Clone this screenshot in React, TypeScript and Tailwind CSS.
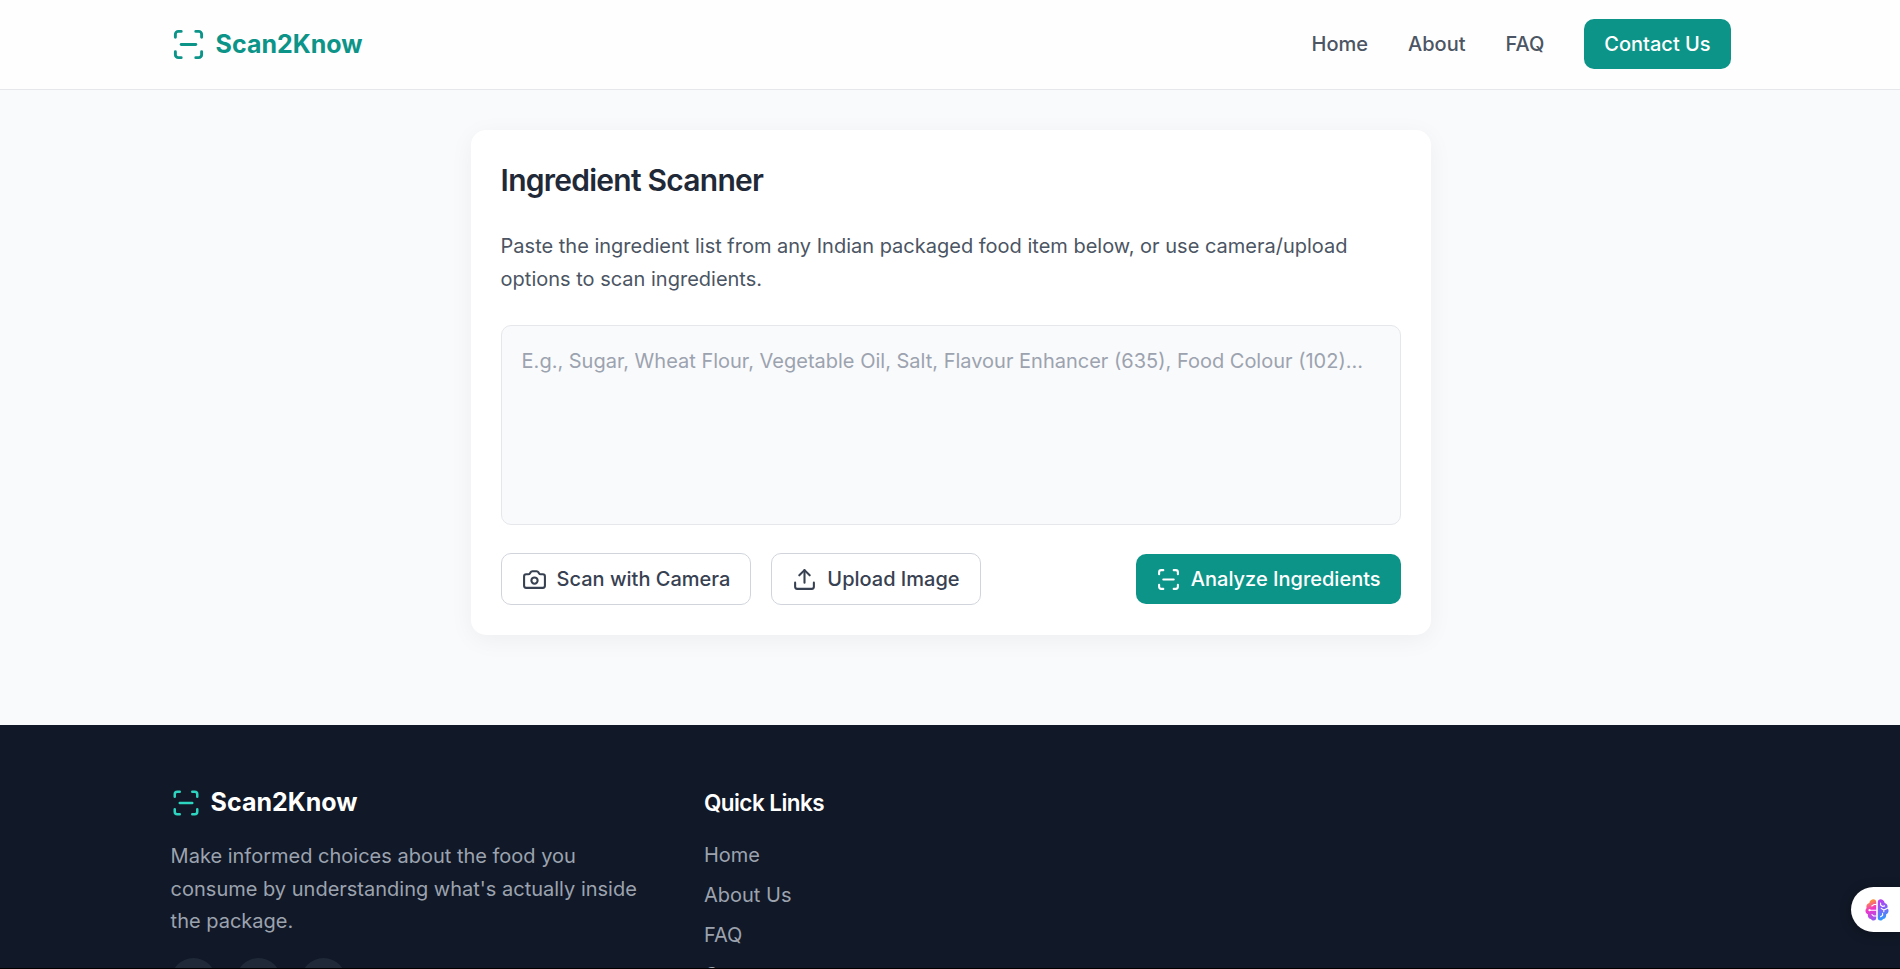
import { Camera, ScanLine, Upload } from "lucide-react";

const navLinks = ["Home", "About", "FAQ"];
const quickLinks = ["Home", "About Us", "FAQ", "Contact"];

function Header() {
  return (
    <header className="h-[90px] shrink-0 border-b border-[#e5e7eb] bg-[#fefefe]">
      <div className="mx-auto flex h-[88px] w-[1600px] items-center justify-between pr-[19.4px] pl-[20.6px]">
        <a className="flex items-center gap-[10px] text-[25px] leading-[35px] font-bold text-[#0d9488]">
          <ScanLine size={35} />
          <span>Scan2Know</span>
        </a>
        <nav className="flex items-center gap-10 text-[20px] leading-[30px] font-medium text-[#4b5563]">
          {navLinks.map((label) => (
            <a key={label}>{label}</a>
          ))}
          <a className="rounded-[10px] bg-[#0d9488] px-5 py-[10px] text-white">Contact Us</a>
        </nav>
      </div>
    </header>
  );
}

function ScannerCard() {
  return (
    <section className="ml-[470.6px] w-[960px] rounded-[15px] bg-white p-[30px] shadow-[0_5px_25px_rgba(0,0,0,0.05)]">
      <h2 className="text-[30px] leading-[40px] font-semibold tracking-[-0.025em] text-[#1f2937]">
        Ingredient Scanner
      </h2>
      <p className="mt-[30px] text-[20px] leading-[32.5px] text-[#4b5563]">
        Paste the ingredient list from any Indian packaged food item below, or use camera/upload
        options to scan ingredients.
      </p>
      <textarea
        className="mt-[30px] block h-[200px] w-full resize-none rounded-[10px] border border-[#e5e7eb] bg-[#f9fafc] p-5 text-[20px] leading-[30px] outline-none placeholder:text-[#9ca3af]"
        placeholder="E.g., Sugar, Wheat Flour, Vegetable Oil, Salt, Flavour Enhancer (635), Food Colour (102)..."
      />
      <div className="mt-[28px] flex items-center justify-between text-[20px] leading-[30px] font-medium">
        <div className="flex gap-5 text-[#374151]">
          <button className="flex items-center gap-[10px] rounded-[10px] border border-[#d1d5db] px-5 py-[10px]">
            <Camera size={25} />
            Scan with Camera
          </button>
          <button className="flex items-center gap-[10px] rounded-[10px] border border-[#d1d5db] px-5 py-[10px]">
            <Upload size={25} />
            Upload Image
          </button>
        </div>
        <button className="flex items-center gap-[10px] rounded-[10px] bg-[#0d9488] px-5 py-[10px] text-white">
          <ScanLine size={25} />
          Analyze Ingredients
        </button>
      </div>
    </section>
  );
}

function Footer() {
  return (
    <footer className="h-[243px] shrink-0 overflow-hidden bg-[#111827] pt-[60px]">
      <div className="mx-auto flex w-[1600px] gap-[60px] pr-[19.4px] pl-[20.6px]">
        <div className="w-[473.4px]">
          <div className="flex items-center gap-[10px] text-[25px] leading-[35px] font-bold text-white">
            <ScanLine size={30} className="text-[#2dd4bf]" />
            <span>Scan2Know</span>
          </div>
          <p className="mt-5 text-[20px] leading-[32.5px] text-[#9ca3af]">
            Make informed choices about the food you consume by understanding what's actually inside
            the package.
          </p>
          <div className="mt-5 flex gap-5">
            <span className="size-[45px] rounded-full bg-[#1f2937]" />
            <span className="size-[45px] rounded-full bg-[#1f2937]" />
            <span className="size-[45px] rounded-full bg-[#1f2937]" />
          </div>
        </div>
        <div>
          <h3 className="text-[22.5px] leading-[35px] font-semibold tracking-[-0.025em] text-white">
            Quick Links
          </h3>
          <ul className="mt-5 flex flex-col gap-[10px] text-[20px] leading-[30px] text-[#9ca3af]">
            {quickLinks.map((label) => (
              <li key={label}>{label}</li>
            ))}
          </ul>
        </div>
      </div>
    </footer>
  );
}

function BrainIcon() {
  return (
    <svg width="24" height="24" viewBox="0 0 24 24" fill="none">
      <defs>
        <linearGradient id="brain-left" x1="3" y1="2" x2="11" y2="22" gradientUnits="userSpaceOnUse">
          <stop offset="0" stopColor="#ffa51f" />
          <stop offset="0.45" stopColor="#f035c8" />
          <stop offset="1" stopColor="#8f5cf5" />
        </linearGradient>
        <linearGradient id="brain-right" x1="13" y1="2" x2="20" y2="22" gradientUnits="userSpaceOnUse">
          <stop offset="0" stopColor="#c13df0" />
          <stop offset="0.5" stopColor="#7a66f8" />
          <stop offset="1" stopColor="#22a0ff" />
        </linearGradient>
      </defs>
      <path
        d="M11.2 4v16c0 3-4 3.300-5.200 1C3.800 21 2.300 18.600 3 16.500 0 15.200-.2 11.600 1.600 10.100.8 7.500 2.300 5.400 4.300 5 5.200.2 11.200.2 11.200 4Z"
        fill="url(#brain-left)"
      />
      <path
        d="M12.800 4v16c0 3 4 3.300 5.200 1 2.200 0 3.700-2.400 3-4.500 3-1.300 3.200-4.900 1.400-6.400.8-2.600-.7-4.700-2.700-5.100-.9-4.800-6.900-4.800-6.900-1Z"
        fill="url(#brain-right)"
      />
      <path
        d="M11.200 6.500H9L6.800 8M11.200 12.200H4.500M11.200 18H8.600L7 16.600M15.600 5v2l2 1.500M17.600 8.500l2-.6M23 10l-4.200 2-2.600-1.600M18.800 12v1.800M15.600 18.800l2-1.400v-2"
        stroke="#fff"
        strokeWidth="1.1"
        strokeLinecap="round"
      />
      <circle cx="4.5" cy="12.2" r="1.1" fill="#fff" />
    </svg>
  );
}

export default function App() {
  return (
    <div className="relative flex h-[969px] w-full flex-col overflow-hidden border-b border-black bg-[#f9fafc] font-['Inter',sans-serif]">
      <Header />
      <main className="h-[635px] shrink-0 pt-10">
        <ScannerCard />
      </main>
      <Footer />
      <button className="absolute top-[887px] right-0 flex h-[45px] w-[49px] items-center rounded-l-full bg-white pl-[14px] shadow-[0_2px_12px_rgba(0,0,0,0.3)]">
        <BrainIcon />
      </button>
    </div>
  );
}
